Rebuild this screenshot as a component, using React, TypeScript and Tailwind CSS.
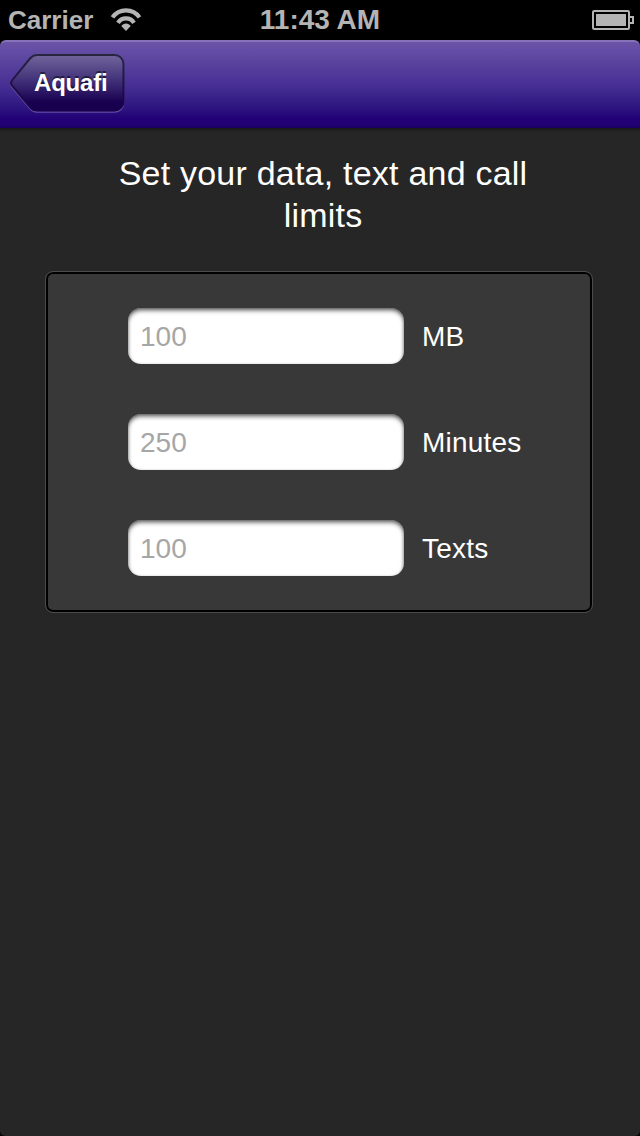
import { useState } from 'react'

const fields = [
  { label: 'MB', placeholder: '100' },
  { label: 'Minutes', placeholder: '250' },
  { label: 'Texts', placeholder: '100' },
]

const WifiIcon = () => (
  <svg width="32" height="24" viewBox="0 0 32 24" fill="none" stroke="#b4b4b4" strokeWidth="4.2">
    <path d="M2.5 9.400a16.600 16.600 0 0 1 27 0" />
    <path d="M8 14.900a9.400 9.400 0 0 1 16 0" />
    <path d="M16 23l-4.700-4.900a5.600 5.600 0 0 1 9.400 0z" fill="#b4b4b4" stroke="none" />
  </svg>
)

const BatteryIcon = () => (
  <svg width="42" height="20" viewBox="0 0 42 20" fill="none">
    <rect x="1" y="1" width="36" height="18" rx="1.2" stroke="#b4b4b4" strokeWidth="2" />
    <rect x="4" y="4" width="30" height="12" fill="#b4b4b4" />
    <path d="M38 7h3v6h-3" stroke="#b4b4b4" strokeWidth="2" />
  </svg>
)

const StatusBar = () => (
  <div className="grid h-10 grid-cols-3 items-center bg-black text-[#b4b4b4] font-bold">
    <div className="flex items-center pl-2">
      <span className="text-[26px] leading-10">Carrier</span>
      <span className="ml-[17px]">
        <WifiIcon />
      </span>
    </div>
    <span className="text-center text-[28px] leading-[38px]">11:43 AM</span>
    <div className="flex justify-end pr-1.5">
      <BatteryIcon />
    </div>
  </div>
)

const BackButton = ({ title }: { title: string }) => (
  <button type="button" className="relative mb-0.5 ml-2 h-[62px] w-[118px]">
    <svg className="absolute inset-0" width="118" height="62" viewBox="0 0 118 62">
      <defs>
        <linearGradient id="back-fill" x1="0" y1="0" x2="0" y2="1">
          <stop offset="0" stopColor="#71659c" />
          <stop offset="0.5" stopColor="#3d2c75" />
          <stop offset="0.85" stopColor="#190050" />
          <stop offset="1" stopColor="#17004c" />
        </linearGradient>
        <linearGradient id="back-edge" x1="0" y1="0" x2="0" y2="1">
          <stop offset="0" stopColor="#292440" />
          <stop offset="1" stopColor="#18004a" />
        </linearGradient>
      </defs>
      <path
        d="M29 3H106.500a9 9 0 0 1 9 9V50a9 9 0 0 1-9 9H29q-4 0-7-3.500L4 34q-2-3 0-5L22 6.500Q25 3 29 3z"
        fill="none"
        stroke="#7d66b8"
        strokeOpacity="0.7"
        strokeWidth="1.500"
      />
      <path
        d="M29 2H106.500a9 9 0 0 1 9 9V48.500a9 9 0 0 1-9 9H29q-4 0-7-3.500L4 32.500q-2-2.500 0-5L22 5.500Q25 2 29 2z"
        fill="url(#back-fill)"
        stroke="url(#back-edge)"
        strokeWidth="2"
      />
    </svg>
    <span className="relative block pb-0.5 pl-[26px] text-left text-[24px] leading-[58px] font-bold tracking-[-0.2px] text-white [text-shadow:0_-2px_0_rgba(0,0,0,0.5)]">
      {title}
    </span>
  </button>
)

const NavBar = () => (
  <div className="bg-black">
    <header className="flex h-[88px] items-center rounded-t-[6px] border-t-2 border-[#8773ba] bg-linear-to-b from-[#6b54a8] from-0% via-[#472f94] via-50% to-[#220076] to-90% shadow-[inset_0_-2px_0_#1b0066]">
      <BackButton title="Aquafi" />
    </header>
  </div>
)

const LimitField = ({ label, placeholder }: { label: string; placeholder: string }) => {
  const [value, setValue] = useState('')

  return (
    <label className="flex items-center">
      <input
        type="text"
        value={value}
        placeholder={placeholder}
        onChange={(event) => setValue(event.target.value)}
        className="h-14 w-[276px] rounded-[13px] bg-white px-3 pt-0.5 text-[28px] text-black shadow-[inset_0_3px_4px_rgba(0,0,0,0.45),inset_0_1px_3px_rgba(0,0,0,0.35)] placeholder:text-[#a6a6a6] focus:outline-none"
      />
      <span className="ml-[18px] pt-0.5 text-[28px] leading-8 tracking-[0.2px] text-white">{label}</span>
    </label>
  )
}

const App = () => {
  return (
    <div className="min-h-[1136px] w-[640px] bg-black font-['Liberation_Sans',Arial,sans-serif]">
      <StatusBar />
      <NavBar />
      <main className="flex h-[1008px] flex-col rounded-b-[5px] bg-[#262626] shadow-[inset_0_5px_3px_-3px_rgba(0,0,0,0.35)]">
        <h1 className="mx-auto mt-6 w-[450px] pl-1.5 text-center text-[34px] leading-[42px] tracking-[0.22px] text-white">
          Set your data, text and call limits
        </h1>
        <form className="mt-[35px] ml-[45px] flex h-[342px] w-[548px] flex-col gap-[50px] rounded-[8px] border border-[#4b4b4b] bg-[#383838] pt-9 pl-[82px] shadow-[inset_0_0_0_2px_#000]">
          {fields.map((field) => (
            <LimitField key={field.label} label={field.label} placeholder={field.placeholder} />
          ))}
        </form>
      </main>
    </div>
  )
}

export default App
